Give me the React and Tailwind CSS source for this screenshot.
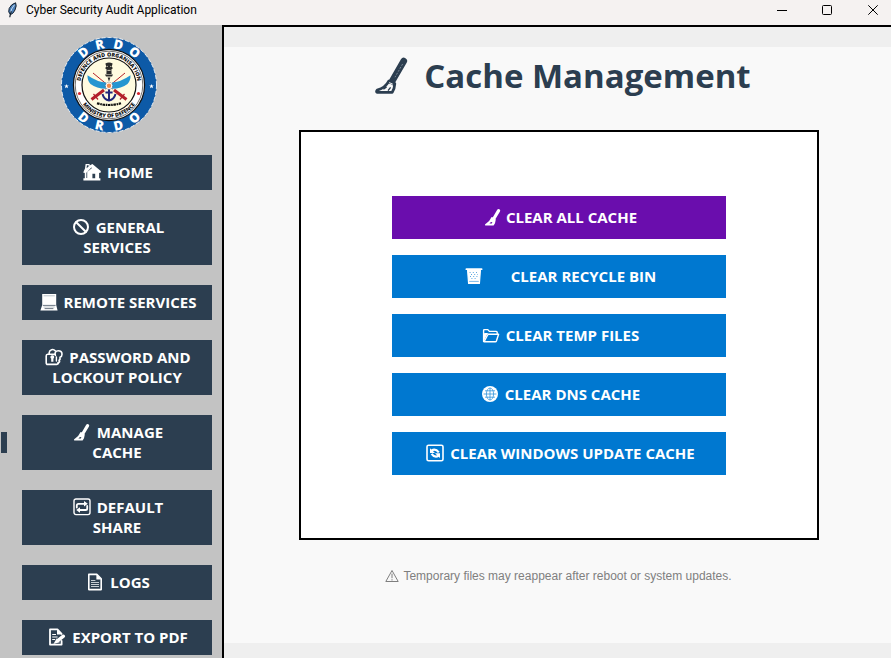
const svgProps = {
  viewBox: "0 0 18 18",
  fill: "none",
  stroke: "currentColor",
  strokeLinecap: "round",
  strokeLinejoin: "round",
  "aria-hidden": true,
};

function HomeIcon() {
  return (
    <svg {...svgProps} strokeWidth="1.4" className="size-[18px] shrink-0">
      <path fill="currentColor" stroke="none" fillRule="evenodd" d="M2 5.500 2.600 1h4v1.600L9.400.9 17.800 8v1.600l-1.700.4v5.200h1.300v2.200H.4v-2.200h1.400V10L.2 9.400ZM3.900 2.200l-.3 3 2-1.800V2.200ZM9.400 10.800v4.400h2.800v-4.400ZM3.400 9.800v5.200h.8V9L9 4.900l-.7-.5Z" />
    </svg>
  );
}

function ProhibitedIcon() {
  return (
    <svg {...svgProps} strokeWidth="2" className="size-[18px] shrink-0">
      <circle cx="9" cy="9" r="7" />
      <path d="m4.200 4.200 9.600 9.600" />
    </svg>
  );
}

function LaptopIcon() {
  return (
    <svg {...svgProps} strokeWidth="1" className="size-[18px] shrink-0">
      <path fill="currentColor" stroke="none" d="M2.200 1h14v11l1.400 5.400H.4L2.200 12Z" />
      <path stroke="#8b97a3" strokeWidth=".6" strokeLinecap="butt" d="M3.600 2.800h11.200" />
      <path stroke="#2c3e50" strokeWidth=".7" strokeLinecap="butt" d="M2.800 12.400h12.800M4.600 15.600h8.800" />
      <path stroke="#8b97a3" strokeWidth=".6" strokeLinecap="butt" d="M3.500 14h11.200" />
    </svg>
  );
}

function LockKeyIcon() {
  return (
    <svg {...svgProps} strokeWidth="1.600" className="size-[18px] shrink-0">
      <path d="M4.200 6.200V4.600a3.400 3.400 0 0 1 6-1.800" />
      <path d="M10.200 6.200H2.600Q1.200 6.200 1.200 8v6.400q0 2 1.400 2h9.200q1.400 0 1.400-1.800" />
      <path d="M10.400 7.400c-1-2.600.2-4.600 2.800-4.600 2.400 0 3.800 1.400 3.800 3.400 0 1.600-.8 2.600-2 3v2.200l-1 1 .6 1.200-1.600 1.800" />
      <path fill="currentColor" stroke="none" d="M5.400 9.200a1.900 1.900 0 1 1 3 1.400v3.200H6.200v-3.200q-.8-.6-.8-1.400Z" />
      <path strokeWidth="1.400" d="M11.400 9v4" />
    </svg>
  );
}

function BroomIcon() {
  return (
    <svg {...svgProps} className="size-[18px] shrink-0">
      <path strokeWidth="3.200" d="m14.600 2.600-4.800 8.200" />
      <path fill="currentColor" stroke="none" fillRule="evenodd" d="M7.600 9q2.400.2 4.200 2.600l-.8 3.600-1.400 2.200H1.400q-.9-.3-.2-1.200 4.400-2.400 6.400-7.200ZM7 14l-1.600 1.500h2.400l.6-1.200Z" />
    </svg>
  );
}

function RepeatIcon() {
  return (
    <svg {...svgProps} strokeWidth="1.400" className="size-[18px] shrink-0">
      <rect x="1" y="1" width="16" height="15.600" rx="2" />
      <path strokeWidth="1.800" d="M3.800 9.600V7.400q0-1.600 1.600-1.600h6.200M14.200 8v2.400q0 1.600-1.600 1.600H6.400" />
      <path fill="currentColor" stroke="none" d="m11 3 3.800 2.800L11 8.600ZM7 9.200 3.200 12 7 14.800Z" />
    </svg>
  );
}

function PageIcon() {
  return (
    <svg {...svgProps} strokeWidth="1.600" className="size-[18px] shrink-0">
      <path d="M2.800 1.400h8l4.400 4.400v10.800H2.800Z" />
      <path fill="currentColor" stroke="none" d="M10.400 1.400v5h5Z" />
      <path strokeWidth="1" stroke="#c5ccd3" strokeLinecap="butt" d="M5 7.500h4.400M5 9.500h8M5 11.500h8M5 13.500h8" />
    </svg>
  );
}

function MemoIcon() {
  return (
    <svg {...svgProps} strokeWidth="1.800" className="size-[18px] shrink-0">
      <path d="M13.600 13v3.600H2V1.400h7.400l4.200 4.400" />
      <path fill="currentColor" stroke="none" d="M9 1.400v5h5Z" />
      <path strokeWidth="1.200" strokeLinecap="butt" d="M4.200 6.500h3.800M4.200 9h5.400M4.200 11.500h3" />
      <path strokeWidth="3.400" d="m15.400 8.200-5 4" />
      <path fill="currentColor" stroke="none" d="m8.800 10.200 3 4-6.400 1.800Z" />
    </svg>
  );
}

function BinIcon() {
  return (
    <svg {...svgProps} strokeWidth="1.200" className="size-[18px] shrink-0">
      <path strokeWidth="1.800" d="M1.400 2.200h15.200" />
      <path fill="currentColor" d="M2.600 3.400h12.800l-1 13H3.600Z" />
      <path stroke="#5aa7e0" strokeWidth="1" strokeDasharray="1 2.200" strokeLinecap="butt" d="M4.600 5.500h9.400M6 7.500h7M5 9.500h8M6.400 11.500h6" />
      <path stroke="#5aa7e0" strokeWidth=".8" d="M4.600 14.400h8.800" />
    </svg>
  );
}

function FolderIcon() {
  return (
    <svg {...svgProps} strokeWidth="1.400" className="size-[18px] shrink-0">
      <path d="M1.600 15.400V4.600q0-1 1-1h3.200l1.600 1.800h6.800q1 0 1 1v1.200" />
      <path d="m2 15.800 3.600-6.800q.4-.8 1.200-.8h9.800l-2.200 6.800q-.3.800-1 .8Z" />
      <path fill="currentColor" stroke="none" d="M1.600 7.500v7.900l3.600-7.200q.4-1 1.600-1.200H3Z" />
    </svg>
  );
}

function GlobeIcon() {
  return (
    <svg {...svgProps} strokeWidth="1" className="size-[18px] shrink-0">
      <circle cx="9" cy="9" r="8" fill="currentColor" stroke="none" />
      <g stroke="#3494db" strokeWidth=".8" strokeLinecap="butt">
        <ellipse cx="9" cy="9" rx="3.600" ry="6" />
        <path d="M9 3v12M2.600 9h12.800M4 5.800h10M4 12.200h10" />
      </g>
    </svg>
  );
}

function RefreshIcon() {
  return (
    <svg {...svgProps} strokeWidth="1.600" className="size-[18px] shrink-0">
      <rect x="1" y="1.200" width="16" height="15.600" rx="1.600" />
      <path strokeWidth="2.200" strokeLinecap="butt" d="M5.600 6.400q4-2.200 7.200 2M12.600 11.800q-4 2.200-7-2" />
      <path fill="currentColor" stroke="none" d="M4 4.200v4.800h5ZM14 14V9.200H9Z" />
    </svg>
  );
}

function TitleBroom() {
  return (
    <svg viewBox="0 0 36 40" fill="none" className="h-10 w-9 shrink-0" aria-hidden="true">
      <path d="M29.800 5 18.600 24.400" stroke="#2c3e50" strokeWidth="6.600" strokeLinecap="round" />
      <path d="M28.600 8 21 21.200" stroke="#8f9aa6" strokeWidth=".8" strokeDasharray="2 1.400" />
      <path d="M14.800 25q3.600-1 6 2.800-.2 4.600-2.600 8.600H3.400q-1.600-.6-.2-2.200 8.400-2.600 11.600-9.200Z" fill="#f9f9f9" stroke="#2c3e50" strokeWidth="2.800" strokeLinejoin="round" />
      <path d="M13.600 27.200q4 .2 6.600 3.200l1-2.800-3-3.400-3.400.6Z" fill="#2c3e50" />
      <path d="m12.200 31.200-2.400 1.600M16.200 31.800l-1.800 2.400" stroke="#2c3e50" strokeWidth="1.400" strokeLinecap="round" />
      <path d="m15.200 26.600 3.600 1.600" stroke="#f9f9f9" strokeWidth="1" />
    </svg>
  );
}

function WarningIcon() {
  return (
    <svg viewBox="0 0 14 14" fill="none" stroke="currentColor" strokeLinejoin="round" className="size-3.5 shrink-0" aria-hidden="true">
      <path d="M7 1.500 13.200 12.500H.8Z" />
      <path d="M7 4.600v4.600M7 10.200v1.300" />
    </svg>
  );
}

function FeatherIcon() {
  return (
    <svg viewBox="0 0 16 16" className="size-4 shrink-0" aria-hidden="true">
      <path d="M11.600.8q1.400 2.800-.6 7.200-1.600 3.600-4.400 4.600Q3.600 10.400 5.200 6.400 7.200 2 11.600.8Z" fill="#4c7fb8" stroke="#14202e" />
      <path d="M10.400 2.800Q7 7 6.400 11" stroke="#c4dcf2" fill="none" />
      <path d="M7.400 9.200q-1.400 3-1.600 6" stroke="#14202e" strokeWidth="1.200" fill="none" />
    </svg>
  );
}

const ringLetters = [
  { letter: "D", angle: 38 },
  { letter: "R", angle: 13 },
  { letter: "D", angle: -13 },
  { letter: "O", angle: -38 },
];

function Emblem() {
  return (
    <svg viewBox="-48 -48 96 96" role="img" aria-label="DRDO emblem" className="size-24" fontFamily="'Open Sans', 'Noto Sans', sans-serif" fontWeight="800">
      <defs>
        <path id="inner-top" d="M-28.600 0A28.600 28.600 0 0 1 28.600 0" />
        <path id="inner-bottom" d="M-32.600 0A32.600 32.600 0 0 0 32.600 0" />
      </defs>
      <circle r="47.500" fill="#0d5aa7" stroke="#ffffff" strokeWidth=".8" strokeDasharray="4 2" />
      <circle r="35.600" fill="#ffffff" stroke="#111111" strokeWidth="1.200" />
      <circle r="27" fill="#fffbe0" stroke="#111111" strokeWidth="1.200" />
      <circle r="33.800" fill="none" stroke="#111111" strokeWidth=".6" />
      <g fill="#ffffff" fontSize="13" textAnchor="middle">
        {ringLetters.map(({ letter, angle }) => (
          <text key={`top${angle}`} y="-37" transform={`rotate(${-angle})`}>{letter}</text>
        ))}
        {ringLetters.map(({ letter, angle }) => (
          <text key={`bottom${angle}`} y="46" transform={`rotate(${angle})`}>{letter}</text>
        ))}
      </g>
      <g fill="#111111" fontSize="5.400">
        <text textAnchor="middle"><textPath href="#inner-top" startOffset="50%">DEFENCE AND ORGANISATION</textPath></text>
        <text textAnchor="middle"><textPath href="#inner-bottom" startOffset="50%">MINISTRY OF DEFENCE</textPath></text>
      </g>
      <g fill="#ffffff">
        <path d="m-42.500-1 .6 1.600h1.700l-1.300 1 .5 1.700-1.500-1-1.500 1 .5-1.700-1.300-1h1.700Z" />
        <path d="m42.500-1 .6 1.600h1.700l-1.300 1 .5 1.700-1.500-1-1.500 1 .5-1.700-1.300-1h1.700Z" />
      </g>
      <g fill="#d8262c">
        <circle cx="-29.500" cy="8.500" r="1.600" />
        <circle cx="29.500" cy="8.500" r="1.600" />
      </g>
      <g fill="#2a2a2a">
        <path d="M-3.600-21.600q3.600-1.600 7.200 0l-.8 3.200 1 1.600-1.400 1.400.2 4.400h-5.200l.2-4.400-1.400-1.400 1-1.600Z" />
        <path d="M-4-10.400h8l-1 1.800h-6ZM-1.400-7.400h2.800L0-3.600Z" />
      </g>
      <path d="M-2.400-18.600h1.200M1.200-18.600h1.200M-1.600-14.600h3.200" stroke="#fffbe0" strokeWidth=".8" />
      <path d="M0 3v12M-6.500 9Q-5 14.800 0 15.400 5 14.800 6.500 9M-3.600 7.500h7.200" stroke="#23277a" strokeWidth="2" fill="none" />
      <g fill="none" stroke="#b3202a">
        <path d="M-16-12 3.500 4M16-12-3.500 4" strokeWidth="1" />
        <path d="M5 5 17.500 14.500M-5 5-17.500 14.500" strokeWidth="3" />
        <path d="m11 14.500 4.500-5.500M-11 14.500l-4.500-5.500" strokeWidth="1.200" />
      </g>
      <g fill="#2596d1">
        <path d="M-3-2.600q-8 0-18.500-7.200-.2 5.400 3 8.800 6 4.600 15.500 4.800Z" />
        <path d="M3-2.600q8 0 18.500-7.200.2 5.400-3 8.800-6 4.600-15.500 4.800Z" />
      </g>
      <circle cy=".8" r="3.600" fill="#ffffff" stroke="#333333" strokeWidth=".6" strokeDasharray="1 1" />
      <circle cy=".8" r="2.200" fill="#f58a4b" />
      <path d="M-12 18.200q12 3.600 24 0" stroke="#111111" strokeWidth="2.200" strokeDasharray="2.600 .7 1.600 .6" fill="none" />
    </svg>
  );
}

const navItems = [
  { icon: HomeIcon, lines: ["HOME"] },
  { icon: ProhibitedIcon, lines: ["GENERAL", "SERVICES"] },
  { icon: LaptopIcon, lines: ["REMOTE SERVICES"] },
  { icon: LockKeyIcon, lines: ["PASSWORD AND", "LOCKOUT POLICY"] },
  { icon: BroomIcon, lines: ["MANAGE", "CACHE"], active: true },
  { icon: RepeatIcon, lines: ["DEFAULT", "SHARE"] },
  { icon: PageIcon, lines: ["LOGS"] },
  { icon: MemoIcon, lines: ["EXPORT TO PDF"] },
];

const actions = [
  { icon: BroomIcon, label: "CLEAR ALL CACHE", style: "gap-1 bg-[#6a0dad]" },
  { icon: BinIcon, label: "CLEAR RECYCLE BIN", style: "gap-7 bg-[#0078d0]" },
  { icon: FolderIcon, label: "CLEAR TEMP FILES", style: "gap-1.5 bg-[#0078d0]" },
  { icon: GlobeIcon, label: "CLEAR DNS CACHE", style: "gap-1.5 bg-[#0078d0]" },
  { icon: RefreshIcon, label: "CLEAR WINDOWS UPDATE CACHE", style: "gap-1.5 bg-[#0078d0]" },
];

function TitleBar() {
  return (
    <header className="flex h-[25px] shrink-0 items-center justify-between bg-[#f5f2f1] pb-1.5 text-black">
      <div className="flex items-center gap-1.5 pl-1">
        <FeatherIcon />
        <span className="font-['Roboto',sans-serif] text-xs leading-5">Cyber Security Audit Application</span>
      </div>
      <div className="flex items-center">
        <button aria-label="Minimize" className="flex h-5 w-[46px] items-center justify-center">
          <svg viewBox="0 0 10 10" className="size-2.5" stroke="currentColor"><path d="M0 5.500h10" /></svg>
        </button>
        <button aria-label="Maximize" className="flex h-5 w-11 items-center justify-center">
          <svg viewBox="0 0 10 10" className="size-2.5" fill="none" stroke="currentColor"><rect x=".5" y=".5" width="9" height="9" rx="1" /></svg>
        </button>
        <button aria-label="Close" className="flex h-5 w-[42px] items-center justify-center pl-1.5">
          <svg viewBox="0 0 10 10" className="size-2.5" stroke="currentColor"><path d="m.3.300 9.400 9.400M9.700.3.300 9.700" /></svg>
        </button>
      </div>
    </header>
  );
}

function Sidebar() {
  return (
    <aside className="flex w-[222px] shrink-0 flex-col bg-[#c3c3c3] pt-3">
      <div className="flex justify-center pr-1">
        <Emblem />
      </div>
      <nav className="mt-[22px] flex flex-col gap-5 pr-2.5">
        {navItems.map(({ icon: Icon, lines, active }) => (
          <div key={lines[0]} className="flex items-center pl-px">
            <span className={active ? "h-[21px] w-1.5 bg-[#2c3e50]" : "w-1.5"} />
            <button aria-current={active ? "page" : undefined} className="ml-[15px] flex flex-1 flex-col items-center bg-[#2c3e50] pt-[7px] pb-2 text-[15px] leading-5 font-bold text-white">
              <span className="flex h-5 items-center gap-1.5 pl-0.5">
                <Icon />
                {lines[0]}
              </span>
              {lines[1] && <span>{lines[1]}</span>}
            </button>
          </div>
        ))}
      </nav>
    </aside>
  );
}

export default function App() {
  return (
    <div className="flex h-screen flex-col overflow-hidden font-['Open_Sans','Noto_Sans',sans-serif]">
      <TitleBar />
      <div className="flex min-h-0 flex-1">
        <Sidebar />
        <main className="flex min-w-0 flex-1 flex-col border-t-2 border-l-2 border-black bg-[#efefef] pt-5 pb-[15px]">
          <div className="flex flex-1 flex-col items-center bg-[#f9f9f9] pl-0.5">
            <h1 className="mt-[5px] flex items-center gap-3.5 pl-2 text-[33px] leading-12 font-bold text-[#2c3e50]">
              <TitleBroom />
              Cache Management
            </h1>
            <section className="mt-[30px] flex w-full max-w-[520px] flex-col items-center gap-4 border-2 border-black bg-white pt-16 pb-[63px]">
              {actions.map(({ icon: Icon, label, style }) => (
                <button key={label} className={`flex h-[43px] w-full max-w-[334px] items-center justify-center pb-0.5 pl-1 text-[15px] leading-5 font-bold text-white ${style}`}>
                  <Icon />
                  {label}
                </button>
              ))}
            </section>
            <p className="mt-[26px] flex items-center gap-1 font-['Liberation_Sans',Arial,sans-serif] text-xs leading-5 text-[#7f7f7f]">
              <WarningIcon />
              Temporary files may reappear after reboot or system updates.
            </p>
          </div>
        </main>
      </div>
    </div>
  );
}
